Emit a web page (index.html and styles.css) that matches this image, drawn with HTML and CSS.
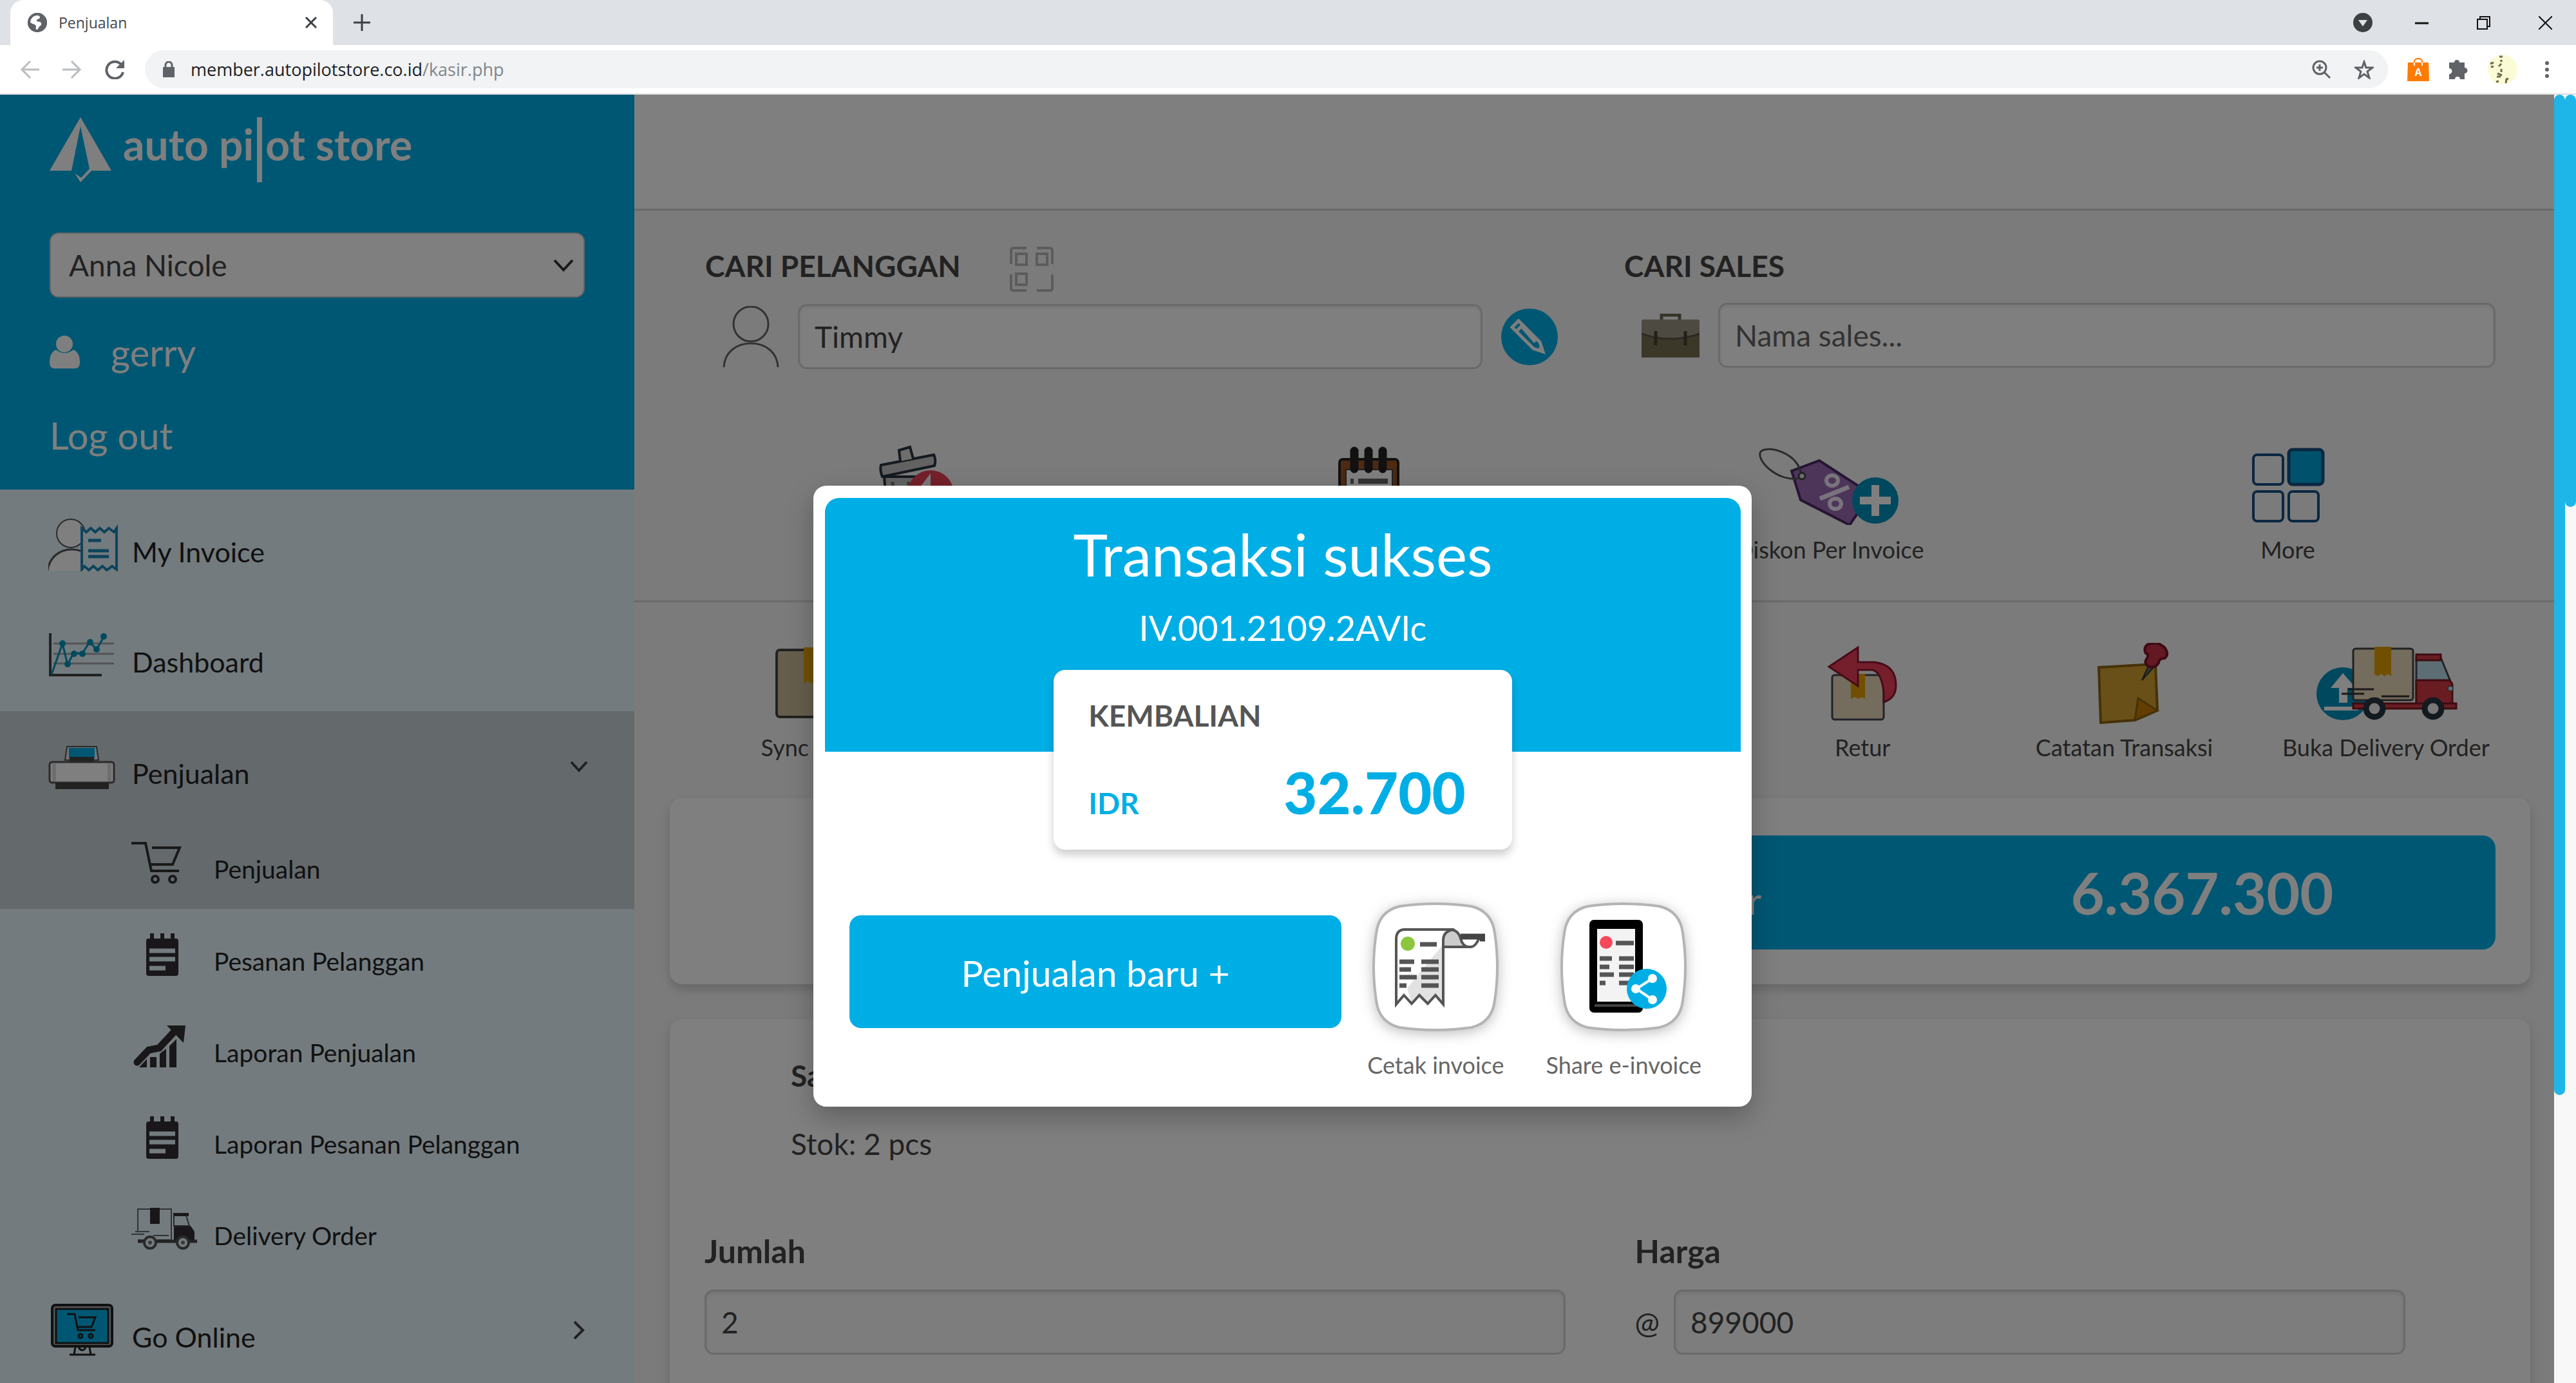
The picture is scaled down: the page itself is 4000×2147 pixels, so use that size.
FILE: index.html
```html
<!DOCTYPE html>
<html lang="id">
<head>
    <meta charset="utf-8">
    <title>Penjualan</title>
    <link rel="stylesheet" href="styles.css">
</head>
<body>
    <!-- Browser tabs -->
    <div class="tab-strip">
        <div class="tab">
            <svg width="30" height="30" viewBox="0 0 30 30"><circle cx="15" cy="15" r="15" fill="#5f6368"/><path d="M11 3c4 0 8 1 8 4s-5 2-5 5 6 0 7 4-3 4-4 7-3 3-4 3 1-5-1-7-7-2-8-5 1-10 7-11z" fill="#fff"/><circle cx="15" cy="15" r="13" fill="none" stroke="#5f6368" stroke-width="4"/></svg>
            <span class="tab-title">Penjualan</span>
            <button class="plain" aria-label="Close tab"><svg width="18" height="18" viewBox="0 0 18 18"><path d="M1 1l16 16M17 1L1 17" stroke="#3c4043" stroke-width="3"/></svg></button>
        </div>
        <button class="plain new-tab" aria-label="New tab"><svg width="26" height="26" viewBox="0 0 26 26"><path d="M13 0v26M0 13h26" stroke="#3c4043" stroke-width="3"/></svg></button>
        <svg class="down-dot" width="30" height="30" viewBox="0 0 30 30"><circle cx="15" cy="15" r="15" fill="#3c4043"/><path d="M8 11h14l-7 10z" fill="#dee1e6"/></svg>
        <div class="window-buttons">
            <button class="plain" aria-label="Minimize"><svg width="21" height="21" viewBox="0 0 21 21"><path d="M0 11h21" stroke="#111" stroke-width="3"/></svg></button>
            <button class="plain" aria-label="Restore"><svg width="21" height="21" viewBox="0 0 21 21"><path d="M1 5h15v15H1zM5 5V1h15v15h-4" fill="none" stroke="#111" stroke-width="2"/></svg></button>
            <button class="plain" aria-label="Close"><svg width="21" height="21" viewBox="0 0 21 21"><path d="M0 0l21 21M21 0L0 21" stroke="#111" stroke-width="2"/></svg></button>
        </div>
    </div>

    <!-- Address bar -->
    <div class="toolbar">
        <button class="plain" aria-label="Back"><svg width="30" height="30" viewBox="0 0 30 30"><path d="M30 15H3M16 2L3 15l13 13" fill="none" stroke="#babcbe" stroke-width="3"/></svg></button>
        <button class="plain" aria-label="Forward"><svg width="30" height="30" viewBox="0 0 30 30"><path d="M0 15h27M14 2l13 13-13 13" fill="none" stroke="#babcbe" stroke-width="3"/></svg></button>
        <button class="plain" aria-label="Reload"><svg width="30" height="30" viewBox="0 0 30 30"><path d="M25 7a13 13 0 1 0 3 12" fill="none" stroke="#5f6368" stroke-width="4"/><path d="M30 0v13H17z" fill="#5f6368"/></svg></button>
        <div class="omnibox">
            <svg width="18" height="25" viewBox="0 0 18 25"><path d="M0 9h18v16H0z" fill="#5f6368"/><path d="M4 10V6a5 5 0 0 1 10 0v4" fill="none" stroke="#5f6368" stroke-width="3"/></svg>
            <span class="url">member.autopilotstore.co.id<span class="url-path">/kasir.php</span></span>
            <svg width="30" height="30" viewBox="0 0 30 30"><circle cx="12" cy="12" r="10" fill="none" stroke="#5f6368" stroke-width="3"/><path d="M12 7v10M7 12h10M19 19l9 9" stroke="#5f6368" stroke-width="3"/></svg>
            <svg width="30" height="30" viewBox="0 0 30 30"><path d="M15 3l3 9h10l-8 6 3 10-8-6-8 6 3-10-8-6h10z" fill="none" stroke="#5f6368" stroke-width="3"/></svg>
        </div>
        <svg width="34" height="36" viewBox="0 0 34 36"><path d="M1 7h32l1 29H0z" fill="#ff7a00"/><path d="M11 11V5a6 4 0 0 1 12 0v6" fill="none" stroke="#ff7a00" stroke-width="2"/><path d="M11 7v5M23 7v5" stroke="#fff" stroke-width="2"/><text x="17" y="28" text-anchor="middle" class="bag-letter">A</text></svg>
        <svg width="31" height="32" viewBox="0 0 31 32"><path d="M1 5h8a4 4 0 1 1 8 0h8v8a4 4 0 1 1 0 9v9h-7a4 4 0 0 0-8 0H1v-8a4 4 0 0 0 0-9z" fill="#5f6368"/></svg>
        <svg width="46" height="46" viewBox="0 0 46 46"><circle cx="23" cy="23" r="23" fill="#fbfbd6"/><path d="M18 3h5M20 8l2 3M21 14l-4 4M4 14l5-2M5 19l4-1M15 29l7 3M14 34h6M21 22v5M13 42l4-1M28 44l1-6 3-1" stroke="#6f6a50" stroke-width="3" fill="none"/></svg>
        <svg width="32" height="30" viewBox="0 0 32 30"><circle cx="16" cy="5" r="3" fill="#5f6368"/><circle cx="16" cy="15" r="3" fill="#5f6368"/><circle cx="16" cy="25" r="3" fill="#5f6368"/></svg>
    </div>

    <div class="viewport">
        <div class="stage">
            <div class="page">
                <!-- Sidebar -->
                <aside class="sidebar">
                    <div class="account">
                        <div class="logo">
                            <svg width="96" height="101" viewBox="0 0 96 101"><path fill="#fff" d="M48 0L0 83h34L48 14l14 66-13 14-10-7 9 14 17-18h31z"/></svg>
                            <span class="logo-text">auto pi<i class="logo-bar"></i>ot store</span>
                        </div>
                        <div class="select-box">
                            <select aria-label="Toko"><option>Anna Nicole</option></select>
                            <svg class="select-arrow" width="32" height="20" viewBox="0 0 32 20"><path d="M2 2l14 15L30 2" fill="none" stroke="#333" stroke-width="4"/></svg>
                        </div>
                        <div class="user">
                            <svg width="47" height="51" viewBox="0 0 47 51"><ellipse cx="23" cy="13" rx="13" ry="13" fill="#fff"/><path d="M10 22q13 10 27 0 10 4 10 20 0 9-8 9H8q-8 0-8-9 0-16 10-20z" fill="#fff"/></svg>
                            <span>gerry</span>
                        </div>
                        <a href="#" class="logout">Log out</a>
                    </div>
                    <nav class="menu">
                        <a href="#" class="menu-item">
                            <span class="menu-icon"><svg width="112" height="82" viewBox="2 0 112 82"><path d="M1 81c2-20 18-33 37-33s34 13 36 33z" fill="#fff"/><path d="M1 81c2-20 18-33 37-33s30 10 34 25" fill="none" stroke="#555" stroke-width="3"/><ellipse cx="37" cy="23" rx="22" ry="22" fill="#fff" stroke="#555" stroke-width="2"/><path d="M54 15l7 6 7-6 7 6 7-6 7 6 7-6 8 6 4-6v64l-7-5-8 6-7-6-7 6-7-6-7 6-7-6-4 5z" fill="#e6f6fc" stroke="#1e87b8" stroke-width="4"/><path d="M64 34h20M64 50h32M64 59h32" stroke="#1e87b8" stroke-width="5"/></svg></span>
                            <span class="menu-text">My Invoice</span>
                        </a>
                        <a href="#" class="menu-item">
                            <span class="menu-icon"><svg width="104" height="68" viewBox="0 0 104 68"><path d="M8 16h94M8 32h94M8 47h94" stroke="#a4a9ac" stroke-width="3"/><path d="M3 0v65h80" fill="none" stroke="#444" stroke-width="4"/><path d="M5 64l17-48 8 33 9-18h14l11-17 11 11 11-19" fill="none" stroke="#0095bd" stroke-width="3"/><g fill="#0095bd"><circle cx="22" cy="16" r="5"/><circle cx="30" cy="48" r="5"/><circle cx="40" cy="32" r="5"/><circle cx="53" cy="32" r="5"/><circle cx="65" cy="14" r="5"/><circle cx="75" cy="25" r="5"/><circle cx="86" cy="5" r="5"/></g></svg></span>
                            <span class="menu-text">Dashboard</span>
                        </a>
                        <div class="menu-active">
                            <a href="#" class="menu-item">
                                <span class="menu-icon"><svg width="104" height="72" viewBox="0 -4 104 72"><path d="M29 1h46l3 21H26z" fill="#e8e8e8" stroke="#555" stroke-width="2"/><path d="M32 3h40v16H32z" fill="#00aee6"/><path d="M33 17h38v9H33z" fill="#444"/><rect x="2" y="25" width="100" height="32" rx="4" fill="#fff" stroke="#555" stroke-width="3"/><path d="M6 27h6v28H6zM92 27h6v28h-6z" fill="#ddd"/><path d="M11 57h83v10H11z" fill="#444"/></svg></span>
                                <span class="menu-text">Penjualan</span>
                                <svg width="28" height="18" viewBox="0 0 28 18"><path d="M2 2l12 13L26 2" fill="none" stroke="#444" stroke-width="4"/></svg>
                            </a>
                            <a href="#" class="sub-item sub-first">
                                <span class="sub-icon"><svg width="78" height="66" viewBox="0 0 78 66"><path d="M0 3h22l9 43h43M32 10h43l-11 26H29" fill="none" stroke="#333" stroke-width="4"/><circle cx="37" cy="59" r="5" fill="none" stroke="#333" stroke-width="4"/><circle cx="64" cy="59" r="5" fill="none" stroke="#333" stroke-width="4"/></svg></span>
                                <span class="sub-text">Penjualan</span>
                            </a>
                        </div>
                        <a href="#" class="sub-item">
                            <span class="sub-icon note-icon"><svg width="50" height="66" viewBox="0 0 50 66"><rect y="8" width="50" height="58" rx="4" fill="#332f32"/><path d="M9 0v10M25 0v10M41 0v10" stroke="#332f32" stroke-width="6"/><path d="M5 27h40M5 40h40M5 54h25" stroke="#e6f6fc" stroke-width="7"/></svg></span>
                            <span class="sub-text">Pesanan Pelanggan</span>
                        </a>
                        <a href="#" class="sub-item">
                            <span class="sub-icon"><svg width="84" height="66" viewBox="0 0 84 66"><path d="M9 58l18-19 16-3 26-28" fill="none" stroke="#332f32" stroke-width="11" stroke-linecap="round"/><path d="M55 1h29l-3 27z" fill="#332f32"/><path d="M12 66l12-13v13zM29 50h10v16H29zM44 45l10-8v29H44zM59 33l11-11v44H59z" fill="#332f32"/></svg></span>
                            <span class="sub-text">Laporan Penjualan</span>
                        </a>
                        <a href="#" class="sub-item">
                            <span class="sub-icon note-icon"><svg width="50" height="66" viewBox="0 0 50 66"><rect y="8" width="50" height="58" rx="4" fill="#332f32"/><path d="M9 0v10M25 0v10M41 0v10" stroke="#332f32" stroke-width="6"/><path d="M5 27h40M5 40h40M5 54h25" stroke="#e6f6fc" stroke-width="7"/></svg></span>
                            <span class="sub-text">Laporan Pesanan Pelanggan</span>
                        </a>
                        <a href="#" class="sub-item">
                            <span class="sub-icon"><svg width="102" height="66" viewBox="0 0 102 66"><path d="M10 37V2h52v48H10M34 43h24M6 37h22M0 41h20" fill="none" stroke="#666" stroke-width="2"/><path d="M29 0h15v25H29zM65 8h24v5H65zM66 28h26l6 9v14H66z" fill="#332f32"/><path d="M66 12v16h24l-5-16" fill="none" stroke="#555" stroke-width="2"/><path d="M10 52h92" stroke="#444" stroke-width="5"/><circle cx="29" cy="54" r="9" fill="#e6f6fc" stroke="#555" stroke-width="4"/><circle cx="29" cy="54" r="3" fill="#777"/><circle cx="80" cy="54" r="9" fill="#e6f6fc" stroke="#555" stroke-width="4"/><circle cx="80" cy="54" r="3" fill="#777"/></svg></span>
                            <span class="sub-text">Delivery Order</span>
                        </a>
                        <a href="#" class="menu-item">
                            <span class="menu-icon"><svg width="104" height="82" viewBox="0 0 104 82"><rect x="6" y="2" width="93" height="64" rx="5" fill="#aaa" stroke="#222" stroke-width="4"/><path d="M12 8h81v53H12z" fill="#00aee6" stroke="#222" stroke-width="3"/><path d="M29 16h12l5 25h27M47 21h26l-6 15H46" fill="none" stroke="#222" stroke-width="3"/><circle cx="50" cy="50" r="3" fill="none" stroke="#222" stroke-width="3"/><circle cx="66" cy="50" r="3" fill="none" stroke="#222" stroke-width="3"/><path d="M42 67l-2 12M64 67l2 12M33 79h40M47 68q6 8 11 0" fill="none" stroke="#222" stroke-width="3"/></svg></span>
                            <span class="menu-text">Go Online</span>
                            <svg width="28" height="30" viewBox="0 0 28 30"><path d="M7 2l13 13L7 28" fill="none" stroke="#444" stroke-width="4"/></svg>
                        </a>
                    </nav>
                </aside>

                <main class="content">
                    <div class="topbar"></div>

                    <!-- Customer and sales search -->
                    <section class="search">
                        <div class="search-col customer">
                            <div class="search-label">
                                <label for="pelanggan">CARI PELANGGAN</label>
                                <svg width="68" height="70" viewBox="0 0 68 70"><g fill="none" stroke="#b8b8b8" stroke-width="4"><path d="M2 27V6q0-4 4-4h20M42 2h20q4 0 4 4v21M2 43v21q0 4 4 4h20M42 68h20q4 0 4-4V43"/><path d="M10 11h16v17H10zM42 11h16v17H42zM10 42h16v17H10z"/></g></svg>
                            </div>
                            <div class="search-field">
                                <svg class="person" width="88" height="96" viewBox="0 0 88 96"><g fill="none" stroke="#666" stroke-width="3"><ellipse cx="44" cy="28" rx="27" ry="27"/><path d="M2 95c1-22 18-37 42-37s41 15 42 37"/></g></svg>
                                <input type="text" id="pelanggan" value="Timmy">
                                <button class="plain" aria-label="Edit pelanggan"><svg width="88" height="88" viewBox="0 0 88 88"><circle cx="44" cy="44" r="44" fill="#00aee6"/><g fill="none" stroke="#fff" stroke-width="5"><path d="M17 29l10-10 33 33 5 15-15-5zM25 34l9-9M33 29l20 23"/></g><path d="M55 65l11 3-3-12z" fill="#fff"/></svg></button>
                            </div>
                        </div>
                        <div class="search-col">
                            <div class="search-label"><label for="sales">CARI SALES</label></div>
                            <div class="search-field">
                                <svg class="briefcase" width="90" height="68" viewBox="0 0 90 68"><path d="M31 9V2h28v7" fill="none" stroke="#6c6755" stroke-width="5"/><rect y="9" width="90" height="59" rx="3" fill="#9b9482"/><path d="M0 32q20 8 45 8t45-8v36H0z" fill="#777055"/><path d="M0 31q20 8 45 8t45-8" fill="none" stroke="#595443" stroke-width="3"/><path d="M22 27v22M68 27v22" stroke="#45402f" stroke-width="5"/></svg>
                                <input type="text" id="sales" placeholder="Nama sales...">
                            </div>
                        </div>
                    </section>

                    <!-- Invoice actions -->
                    <section class="actions four">
                        <a href="#" class="action" aria-label="Hapus">
                            <span class="action-icon"><svg width="124" height="128" viewBox="0 0 124 128"><g stroke="#2b3540" stroke-width="4" fill="#c4c4c4"><path d="M15 50h73q6 0 6 8l-4 70H21z"/><path d="M10 32l82-16q4 8 1 17L12 50q-4-10-2-18z"/><path d="M40 26l-2-17 17-5 5 18" fill="#ddd"/></g><path d="M28 58l2 70M53 58v70M76 58l-2 70" stroke="#777" stroke-width="5"/><circle cx="87" cy="76" r="36" fill="#e84357"/><path d="M87 45v20q18 4 18 30l-50-9z" fill="#f4f4f4"/></svg></span>
                        </a>
                        <a href="#" class="action" aria-label="Catatan">
                            <span class="action-icon"><svg width="118" height="128" viewBox="2 -3 118 128"><rect x="10" y="20" width="91" height="108" rx="5" fill="#9a5420" stroke="#222" stroke-width="4"/><path d="M20 36h72v92H20z" fill="#fff" stroke="#444" stroke-width="2"/><path d="M33 7v28M55 7v28M77 7v28" stroke="#222" stroke-width="13" stroke-linecap="round"/><path d="M27 54h5M39 54h46" stroke="#666" stroke-width="8"/><circle cx="105" cy="85" r="23" fill="#0090bd"/></svg></span>
                        </a>
                        <a href="#" class="action">
                            <span class="action-icon"><svg width="224" height="122" viewBox="0 0 224 122"><path d="M52 38L95 22l80 52-33 48-76-39z" fill="#9b6bb5" stroke="#4b2a66" stroke-width="4"/><path d="M62 50C32 54 0 26 3 10 8-4 66 8 67 47" fill="none" stroke="#555" stroke-width="3"/><circle cx="68" cy="46" r="5" fill="#ddd" stroke="#444" stroke-width="3"/><path d="M96 81l45-18" stroke="#f3e9f7" stroke-width="7"/><ellipse cx="115" cy="53" rx="9" ry="8" fill="none" stroke="#f3e9f7" stroke-width="6"/><ellipse cx="120" cy="89" rx="9" ry="8" fill="none" stroke="#f3e9f7" stroke-width="6"/><circle cx="182" cy="84" r="36" fill="#0090bd"/><path d="M182 60v48M158 84h48" stroke="#fff" stroke-width="12"/></svg></span>
                            <span>Diskon Per Invoice</span>
                        </a>
                        <a href="#" class="action">
                            <span class="action-icon"><svg width="114" height="118" viewBox="0 0 114 118"><g stroke="#174f85" stroke-width="4" fill="none"><rect x="3" y="11" width="46" height="46" rx="6"/><rect x="58" y="3" width="53" height="54" rx="6" fill="#00a5d8" stroke-width="5"/><rect x="3" y="68" width="46" height="46" rx="6"/><rect x="58" y="68" width="46" height="46" rx="6"/></g></svg></span>
                            <span>More</span>
                        </a>
                    </section>

                    <section class="actions seven">
                        <a href="#" class="action">
                            <span class="action-icon"><svg width="126" height="120" viewBox="0 0 126 120"><rect x="2" y="8" width="122" height="104" rx="5" fill="#cdbd9b" stroke="#444" stroke-width="4"/><path d="M44 4h38v56l-6-4-6 4-7-4-7 4-6-4-6 4z" fill="#e0a000"/></svg></span>
                            <span>Sync Stock</span>
                        </a>
                        <a href="#" class="action retur">
                            <span class="action-icon"><svg width="110" height="118" viewBox="0 0 110 118"><rect x="8" y="46" width="80" height="69" rx="4" fill="#e8d9b8" stroke="#445" stroke-width="3"/><path d="M37 44h22v39l-5-3-5 3-6-3-6 3z" fill="#e0a000"/><path d="M88 88V72Q84 40 70 38H48v25L3 33 48 3v23h26q33 4 33 36 0 20-19 26z" fill="#ea3f58" stroke="#8d1730" stroke-width="3"/></svg></span>
                            <span>Retur</span>
                        </a>
                        <a href="#" class="action">
                            <span class="action-icon"><svg width="140" height="126" viewBox="-28 0 140 126"><path d="M2 38l88-5 3 72-35 15-53 4z" fill="#d0a030" stroke="#8c6510" stroke-width="4"/><path d="M58 120l5-34 30 19z" fill="#c87d00" stroke="#8c6510" stroke-width="3"/><path d="M69 58l11-24 8 3z" fill="#666" stroke="#333" stroke-width="2"/><path d="M77 3q15-7 27 4 8 11 0 17-9 0-9 7-6 10-17 5-6-5-2-11 5-7-1-9-4-7 2-13z" fill="#c93048" stroke="#7c1228" stroke-width="4"/></svg></span>
                            <span>Catatan Transaksi</span>
                        </a>
                        <a href="#" class="action">
                            <span class="action-icon"><svg width="224" height="118" viewBox="-3 0 224 118"><circle cx="42" cy="75" r="41" fill="#0090bd"/><path d="M36 89V66H23l19-23 20 23H49v23zM13 95h53v6H13z" fill="#fff"/><rect x="58" y="5" width="93" height="80" rx="4" fill="#e8d9b8" stroke="#444" stroke-width="3"/><path d="M91 2h26v46l-5-4-5 4-6-4-5 4-5-4z" fill="#e0a000"/><path d="M50 68h40M40 75h35M102 79h43" stroke="#333" stroke-width="3"/><path d="M156 19h38l14 34v34h-52z" fill="#b9dde6" stroke="#445" stroke-width="3"/><path d="M156 14h38v9h-38zM156 54h52l4 6v32h-56z" fill="#d23b45" stroke="#7c1820" stroke-width="3"/><path d="M58 90h160v8H58z" fill="#d23b45" stroke="#7c1820" stroke-width="3"/><circle cx="91" cy="98" r="13" fill="#eee" stroke="#263440" stroke-width="9"/><circle cx="182" cy="98" r="13" fill="#eee" stroke="#263440" stroke-width="9"/><circle cx="209" cy="67" r="4" fill="#b9dde6" stroke="#333"/></svg></span>
                            <span>Buka Delivery Order</span>
                        </a>
                    </section>

                    <section class="card">
                        <div class="total">
                            <span class="total-label">Total Bayar</span>
                            <strong class="total-value">6.367.300</strong>
                        </div>
                    </section>

                    <section class="card product">
                        <div class="product-info">
                            <strong>Sandal</strong>
                            <span>Stok: 2 pcs</span>
                        </div>
                        <div class="product-fields">
                            <div>
                                <label for="jumlah">Jumlah</label>
                                <div class="field-row"><input type="text" id="jumlah" value="2"></div>
                            </div>
                            <div class="price">
                                <label for="harga">Harga</label>
                                <div class="field-row"><span>@</span><input type="text" id="harga" value="899000"></div>
                            </div>
                        </div>
                    </section>
                </main>
            </div>

            <!-- Success popup -->
            <div class="overlay">
                <div class="dialog" role="dialog" aria-labelledby="dialogTitle">
                    <div class="dialog-head">
                        <h1 id="dialogTitle">Transaksi sukses</h1>
                        <p>IV.001.2109.2AVIc</p>
                    </div>
                    <div class="change">
                        <h2>KEMBALIAN</h2>
                        <div class="change-row"><span>IDR</span><strong>32.700</strong></div>
                    </div>
                    <div class="dialog-actions">
                        <button class="new-sale">Penjualan baru +</button>
                        <button class="plain invoice-action">
                            <svg width="198" height="200" viewBox="0 0 198 200"><path class="tile" d="M43 6q56-8 112 0 32 8 36 42 8 52 0 104-4 34-36 42-56 8-112 0-32-8-36-42-8-52 0-104 4-34 36-42z"/>
                                <path d="M38 156V57q0-14 12-15h78q-16 2-17 15v99l-12-12-12 12-13-12-12 12-12-12z" fill="#fff"/><path d="M55 133l56-68v91l-12-12-12 12-13-12-12 12z" fill="#e2e2e2"/><path d="M112 69V55q3-12 11-12 11 0 15 17l4 9z" fill="#ccc"/><path d="M38 158V57q0-14 12-15h78q-16 2-17 15v101l-12-14-12 13-13-13-12 13-12-13zM112 69h42q7 0 13-14M124 42q11 2 14 14 3 12 12 13" fill="none" stroke="#555" stroke-width="4"/><path d="M138 53h38M168 56h8" stroke="#444" stroke-width="9"/><ellipse cx="56" cy="64" rx="11" ry="11" fill="#8cc63f"/><path d="M75 65h26M43 92h23M77 92h27M43 104h18M77 104h27M43 116h27M77 116h27M43 129h11M77 129h27" stroke="#555" stroke-width="7"/></svg>
                            <span>Cetak invoice</span>
                        </button>
                        <button class="plain invoice-action">
                            <svg width="198" height="200" viewBox="0 0 198 200"><path class="tile" d="M43 6q56-8 112 0 32 8 36 42 8 52 0 104-4 34-36 42-56 8-112 0-32-8-36-42-8-52 0-104 4-34 36-42z"/>
                                <rect x="46" y="27" width="83" height="144" rx="7" fill="#000"/><path d="M58 41h59v113H58z" fill="#f3f3f3"/><path d="M54 160h65" stroke="#444" stroke-width="4"/><circle cx="72" cy="62" r="10" fill="#f9475c"/><path d="M87 63h28M62 87h19M92 87h23M62 100h15M92 100h23M62 112h22M92 112h23M62 125h9M92 125h20" stroke="#555" stroke-width="7"/><circle cx="135" cy="134" r="31" fill="#00aee6"/><path d="M144 118l-25 16 25 17" fill="none" stroke="#fff" stroke-width="4"/><circle cx="144" cy="118" r="7" fill="#fff"/><circle cx="118" cy="134" r="7" fill="#fff"/><circle cx="144" cy="151" r="7" fill="#fff"/></svg>
                            <span>Share e-invoice</span>
                        </button>
                    </div>
                </div>
                <div class="scrollbar overlay-scroll"><div class="thumb"></div></div>
            </div>
        </div>
        <div class="scrollbar page-scroll"><div class="thumb"></div></div>
    </div>
</body>
</html>
```
FILE: styles.css
```css
* {
    box-sizing: border-box;
}

body {
    margin: 0;
    height: 100vh;
    overflow: hidden;
    display: flex;
    flex-direction: column;
    font-family: Lato, "Liberation Sans", sans-serif;
    font-size: 46px;
    color: #444;
}

a {
    color: inherit;
    text-decoration: none;
}

svg {
    display: block;
    flex: none;
}

.plain {
    border: 0;
    padding: 0;
    background: none;
    font: inherit;
    color: inherit;
    cursor: pointer;
}

/* browser window */
.tab-strip {
    height: 70px;
    flex: none;
    display: flex;
    align-items: center;
    padding: 0 37px 0 16px;
    background-color: #dee1e6;
    font-family: "Open Sans", sans-serif;
}

.tab {
    width: 501px;
    height: 70px;
    display: flex;
    align-items: center;
    padding: 0 25px 0 27px;
    background-color: #fff;
    border-radius: 20px 20px 0 0;
}

.tab-title {
    flex: 1;
    margin-left: 18px;
    font-size: 23px;
    color: #45484c;
}

.new-tab {
    margin-left: 32px;
}

.down-dot {
    margin-left: auto;
    margin-right: 66px;
}

.window-buttons {
    display: flex;
    align-items: center;
    gap: 75px;
    height: 60px;
}

.toolbar {
    height: 77px;
    flex: none;
    display: flex;
    align-items: center;
    gap: 30px;
    padding: 0 29px 0 31px;
    background-color: #fff;
    border-bottom: 2px solid #ddd;
}

.toolbar .plain {
    margin-right: 6px;
}

.omnibox {
    flex: 1;
    height: 59px;
    display: flex;
    align-items: center;
    gap: 36px;
    padding: 0 22px 0 28px;
    margin-left: -4px;
    border-radius: 30px;
    background-color: #f1f3f4;
}

.url {
    flex: 1;
    margin-left: -11px;
    font: 27px "Open Sans", sans-serif;
    color: #202124;
}

.url-path {
    color: #80868b;
}

.bag-letter {
    font: bold 16px "Open Sans", sans-serif;
    fill: #fff;
}

.viewport {
    flex: 1;
    min-height: 0;
    display: flex;
}

.stage {
    flex: 1;
    position: relative;
    overflow: hidden;
}

.scrollbar {
    width: 17px;
    background-color: #f8f8f8;
}

.thumb {
    background-color: #1eb6e8;
    border-radius: 9px;
}

.page-scroll .thumb {
    height: 32%;
}

.overlay-scroll {
    position: absolute;
    top: 0;
    right: 0;
    bottom: 0;
}

.overlay-scroll .thumb {
    height: 1553px;
}

.page {
    height: 100%;
    padding-right: 17px;
    display: grid;
    grid-template-columns: minmax(0, 985fr) minmax(0, 2981fr);
    background-color: #f6f6f6;
}

/* sidebar */
.sidebar {
    background-color: #e6f6fc;
    overflow: hidden;
}

.account {
    height: 613px;
    padding: 35px 77px 0;
    background-color: #00aee6;
    color: #fff;
    font-size: 58px;
}

.logo {
    display: flex;
    gap: 18px;
    height: 101px;
}

.logo-text {
    display: flex;
    font-size: 66px;
    line-height: 84px;
    font-weight: bold;
    white-space: pre;
}

.logo-bar {
    width: 8px;
    margin: 0 5px;
    height: 101px;
    background-color: #fff;
}

.select-box {
    position: relative;
    margin-top: 78px;
}

select {
    width: 100%;
    height: 101px;
    padding: 0 28px;
    appearance: none;
    border: 2px solid #ccc;
    border-radius: 14px;
    background-color: #fff;
    color: #444;
    font: 46px Lato, sans-serif;
}

.select-arrow {
    position: absolute;
    right: 17px;
    top: 41px;
}

.user {
    display: flex;
    align-items: center;
    gap: 48px;
    height: 70px;
    margin-top: 49px;
}

.logout {
    display: block;
    margin-top: 60px;
    line-height: 70px;
}

.menu {
    color: #222;
}

.menu-item {
    height: 171px;
    display: flex;
    align-items: center;
    padding: 0 72px 0 75px;
    font-size: 43px;
}

.menu-icon {
    width: 130px;
}

.menu-text {
    flex: 1;
    padding-top: 22px;
}

.menu-active {
    margin-top: 2px;
    background-color: #c8d2d8;
}

.sub-item {
    height: 142px;
    display: flex;
    align-items: center;
    padding-left: 204px;
    font-size: 39px;
}

.sub-first {
    height: 136px;
    padding-bottom: 8px;
}

.sub-icon {
    width: 128px;
}

.note-icon {
    padding-left: 23px;
}

.sub-text {
    padding-top: 20px;
}

/* content */
.content {
    overflow: hidden;
}

.topbar {
    height: 180px;
    background-color: #fff;
    border-bottom: 3px solid #d4d4d4;
}

.search {
    display: grid;
    grid-template-columns: 1427fr 1353fr;
    padding: 56px 91px 0 110px;
}

.search-label {
    height: 70px;
    display: flex;
    align-items: center;
    gap: 76px;
    font-weight: bold;
}

.search-label label {
    padding-bottom: 12px;
}

.search-field {
    display: flex;
    align-items: center;
    gap: 29px;
    margin-top: 17px;
    padding-left: 27px;
}

.customer .search-field {
    margin-top: 19px;
    padding-right: 103px;
}

input {
    flex: 1;
    min-width: 0;
    height: 101px;
    padding: 0 23px;
    border: 3px solid #d4d4d4;
    border-radius: 14px;
    background-color: #fff;
    box-shadow: inset 0 3px 5px rgba(0, 0, 0, 0.08);
    color: #444;
    font: 46px Lato, sans-serif;
}

input::placeholder {
    color: #666;
}

.actions {
    display: grid;
    padding: 0 58px 0 79px;
    font-size: 36px;
    line-height: 44px;
}

.four {
    grid-template-columns: repeat(4, 1fr);
    padding-top: 117px;
    padding-bottom: 57px;
    border-bottom: 3px solid #d4d4d4;
}

.seven {
    grid-template-columns: repeat(7, 1fr);
    padding-top: 62px;
    padding-bottom: 57px;
}

.retur {
    grid-column: 5;
}

.action {
    display: flex;
    flex-direction: column;
    align-items: center;
    gap: 13px;
    white-space: nowrap;
}

.action-icon {
    height: 128px;
    display: flex;
    align-items: center;
}

.card {
    margin: 0 37px 54px 55px;
    padding: 58px 54px 54px;
    border-radius: 20px;
    background-color: #fff;
    box-shadow: 0 8px 16px rgba(0, 0, 0, 0.16);
}

.total {
    width: 52%;
    height: 177px;
    margin-left: auto;
    display: flex;
    align-items: baseline;
    justify-content: space-between;
    border-radius: 20px;
    background-color: #00aee6;
    color: #fff;
}

.total-label {
    padding-left: 24px;
    font-size: 58px;
}

.total-value {
    flex: 0 0 63%;
    text-align: center;
    font-size: 90px;
    line-height: 177px;
}

.product {
    height: 700px;
    line-height: 60px;
}

.product-info {
    display: flex;
    flex-direction: column;
    gap: 46px;
    padding-left: 134px;
}

.product-fields {
    display: grid;
    grid-template-columns: 1fr 1fr;
    gap: 108px;
    margin-top: 106px;
}

.product-fields label {
    font-size: 50px;
    font-weight: bold;
}

.product-fields input {
    background-color: #fafafa;
}

.price {
    padding-right: 140px;
}

.field-row {
    display: flex;
    align-items: center;
    gap: 22px;
    margin-top: 28px;
}

/* popup */
.overlay {
    position: absolute;
    inset: 0;
    background-color: rgba(0, 0, 0, 0.5);
}

.dialog {
    width: 36.6%;
    margin: 607px auto 0;
    padding: 19px 17px 43px 18px;
    background-color: #fff;
    border-radius: 20px;
    box-shadow: 0 16px 40px rgba(0, 0, 0, 0.25);
}

.dialog-head {
    height: 394px;
    padding-top: 32px;
    border-radius: 22px 22px 0 0;
    background-color: #00aee6;
    color: #fff;
    text-align: center;
}

.dialog-head h1 {
    margin: 0;
    font-size: 91px;
    font-weight: normal;
    line-height: 110px;
}

.dialog-head p {
    margin: 25px 0 0;
    font-size: 54px;
    line-height: 70px;
}

.change {
    width: 50%;
    height: 279px;
    margin: -127px auto 0;
    padding: 41px 72px 0 54px;
    background-color: #fff;
    border-radius: 18px;
    box-shadow: 0 8px 14px rgba(0, 0, 0, 0.2);
}

.change h2 {
    margin: 0;
    font-size: 46px;
    line-height: 60px;
    color: #555;
}

.change-row {
    display: flex;
    justify-content: space-between;
    align-items: baseline;
    margin-top: 34px;
    line-height: 108px;
    font-weight: bold;
    color: #00aee6;
}

.change-row strong {
    font-size: 90px;
}

.dialog-actions {
    display: flex;
    margin-top: 82px;
    padding: 0 36px 0 38px;
}

.new-sale {
    flex: 1;
    height: 175px;
    margin-top: 20px;
    padding-top: 4px;
    border: 0;
    border-radius: 18px;
    background-color: #00aee6;
    color: #fff;
    font: 57px Lato, sans-serif;
    cursor: pointer;
}

.invoice-action {
    width: 292px;
    display: flex;
    flex-direction: column;
    align-items: center;
    gap: 30px;
    font-size: 36px;
    line-height: 44px;
    color: #666;
}

.invoice-action svg {
    overflow: visible;
}

.tile {
    fill: #fff;
    stroke: #b4b4b4;
    stroke-width: 4;
    filter: drop-shadow(0 4px 10px rgba(0, 0, 0, 0.25));
}
```
